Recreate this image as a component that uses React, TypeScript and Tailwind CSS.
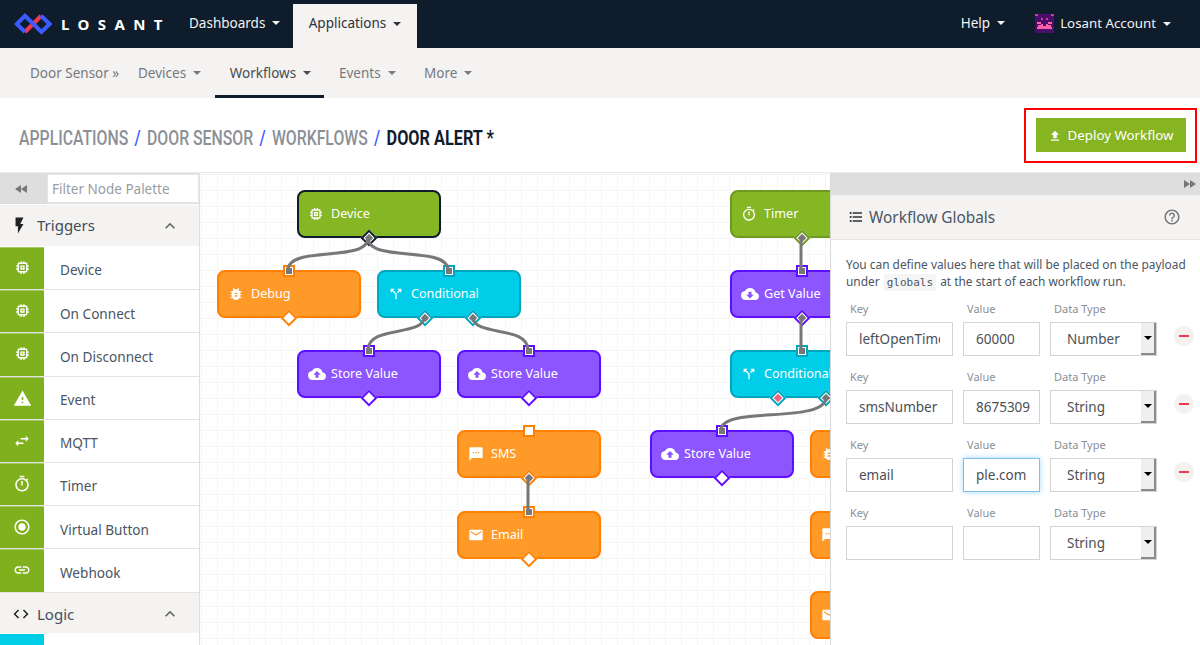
import React from "react";
import {
  MdMemory, MdWarning, MdSwapHoriz, MdOutlineTimer, MdRadioButtonChecked, MdLink, MdBugReport,
  MdCallSplit, MdCloudUpload, MdCloudDownload, MdSms, MdEmail, MdFileUpload, MdFormatListBulleted,
  MdFlashOn, MdHelpOutline, MdCode, MdExpandLess,
} from "react-icons/md";

const Caret = ({ className = "" }: { className?: string }) => (
  <span className={`inline-block w-0 h-0 border-x-[4px] border-x-transparent border-t-[4px] border-t-current ${className}`} />
);

const Logo = () => (
  <svg width="40" height="24" viewBox="14 10 40 24" fill="none" className="shrink-0">
    <path d="M25 30 L41 14" stroke="#f0394f" strokeWidth="4" />
    <path d="M25 30 L16.8 22 L25 13.8 L41.5 30 L49.7 22 L41 13.8" stroke="#3a5bff" strokeWidth="4" strokeLinejoin="miter" />
  </svg>
);

const Avatar = () => (
  <svg width="19" height="19" viewBox="0 0 12 12" shapeRendering="crispEdges" className="shrink-0">
    <rect width="12" height="12" fill="#4a0f6b" />
    <rect x="0" y="0" width="2" height="1.4" fill="#e0379a" />
    <rect x="10" y="0" width="2" height="1.4" fill="#e0379a" />
    <rect x="4" y="2.6" width="1" height="1" fill="#e0379a" />
    <rect x="7" y="2.6" width="1" height="1" fill="#e0379a" />
    <rect x="1" y="5" width="2.5" height="1" fill="#ff5fa8" />
    <rect x="8.5" y="5" width="2.5" height="1" fill="#ff5fa8" />
    <rect x="3.5" y="6" width="5" height="2.6" fill="#ff5fa8" />
    <rect x="1" y="8" width="10" height="1.4" fill="#ff5fa8" />
    <rect x="2.2" y="7" width="1.3" height="1" fill="#ff5fa8" />
    <rect x="8.5" y="7" width="1.3" height="1" fill="#ff5fa8" />
    <rect x="5" y="6.6" width="2" height="0.8" fill="#4a0f6b" />
  </svg>
);

const TopBar = () => (
  <header className="h-[48px] bg-[#0f1c2c] flex items-end shrink-0 text-[#f4f3f1] text-[13.5px]">
    <div className="w-[189px] h-[48px] flex items-center pl-[14px] gap-[7px] shrink-0">
      <Logo />
      <span className="text-[15px] font-bold tracking-[0.56em] text-white">LOSANT</span>
    </div>
    <div className="h-[48px] w-[104px] pb-[2px] flex items-center gap-[7px] shrink-0">
      Dashboards <Caret />
    </div>
    <div className="h-[44px] w-[124px] pb-[5px] flex items-center justify-center gap-[7px] bg-[#f4f3f1] text-[#2d3440] shrink-0">
      Applications <Caret />
    </div>
    <div className="flex-1" />
    <div className="h-[48px] pb-[2px] flex items-center gap-[7px] mr-[30px]">
      Help <Caret />
    </div>
    <div className="h-[48px] pb-[1px] flex items-center gap-[6px] mr-[29px]">
      <Avatar />
      <span className="flex items-center gap-[7px] text-[13.3px]">Losant Account <Caret /></span>
    </div>
  </header>
);

const SubNav = () => (
  <nav className="h-[50px] bg-[#f4f3f1] flex items-center shrink-0 text-[13.5px] text-[#77797d]">
    <span className="ml-[30px] w-[108px]">Door Sensor »</span>
    <span className="w-[77px] flex items-center gap-[7px]">Devices <Caret /></span>
    <span className="relative w-[109px] h-[50px] flex items-center justify-center gap-[7px] text-[#4a4c50] border-b-[3px] border-[#0f1c2c] pt-[3px] pl-[2px]">
      Workflows <Caret />
    </span>
    <span className="ml-[15px] w-[85px] flex items-center gap-[7px]">Events <Caret /></span>
    <span className="flex items-center gap-[7px]">More <Caret /></span>
  </nav>
);

const Crumbs = () => (
  <div className="h-[75px] bg-white flex items-center justify-between shrink-0 pl-[19px] pr-[3px] border-b border-[#ececec]">
    <h1 className="font-['Roboto',sans-serif] font-medium text-[20px] mt-[7px] scale-x-[0.79] origin-left whitespace-nowrap text-[#8b9097] flex items-center gap-[8px]">
      <span>APPLICATIONS</span><span className="text-[#3a5bff]">/</span>
      <span>DOOR SENSOR</span><span className="text-[#3a5bff]">/</span>
      <span>WORKFLOWS</span><span className="text-[#3a5bff]">/</span>
      <span className="text-[#0f1c2c] font-bold text-[20.6px]">DOOR ALERT *</span>
    </h1>
    <div className="border-2 border-[#f00] w-[173px] h-[55px] flex items-center justify-center">
      <button className="w-[150px] h-[34px] pt-px bg-[#86b521] text-white text-[13.3px] flex items-center justify-center gap-[6px]">
        <MdFileUpload size={14} /> Deploy Workflow
      </button>
    </div>
  </div>
);

const triggers: [string, React.ComponentType<{ size?: number }>, number][] = [
  ["Device", MdMemory, 17],
  ["On Connect", MdMemory, 17],
  ["On Disconnect", MdMemory, 17],
  ["Event", MdWarning, 19],
  ["MQTT", MdSwapHoriz, 18],
  ["Timer", MdOutlineTimer, 18],
  ["Virtual Button", MdRadioButtonChecked, 18],
  ["Webhook", MdLink, 18],
];

const Rewind = ({ flip = false }: { flip?: boolean }) => (
  <svg width="12" height="8" viewBox="0 0 12 8" fill="#777" className={flip ? "rotate-180" : ""}>
    <path d="M6 0 L0 4 L6 8 Z M12 0 L6 4 L12 8 Z" />
  </svg>
);

const Palette = () => (
  <aside className="w-[200px] shrink-0 border-r border-[#dedede] bg-white overflow-hidden text-[#4b5563]">
    <div className="h-[31px] bg-[#dedede] flex items-center">
      <div className="w-[47px] flex justify-center pr-[6px]"><Rewind /></div>
      <div className="w-[152px] h-[29px] pt-[2px] bg-white flex items-center pl-[4px] text-[13.5px] text-[#9a9ea4] border border-[#e6e6e6]">Filter Node Palette</div>
    </div>
    <div className="h-[41px] bg-[#f4f3f1] flex items-center text-[15px] pl-[10px] pr-[19px] mt-px text-[#444c5a]">
      <span className="text-[#222] w-[27px]"><MdFlashOn size={19} /></span>
      <span className="flex-1">Triggers</span>
      <span className="text-[#666]"><MdExpandLess size={20} /></span>
    </div>
    <ul className="mt-px">
      {triggers.map(([name, Icon, size]) => (
        <li key={name} className="h-[43.2px] flex items-center border-b-[1.5px] border-[#e4e4e4] text-[13.6px]">
          <span className="w-[44px] h-full bg-[#7fb01d] border-t border-[#a5c76a] text-white flex items-start justify-center pt-[11px] mr-[16px]">
            <Icon size={size} />
          </span>
          <span className="pt-[5px]">{name}</span>
        </li>
      ))}
    </ul>
    <div className="h-[40px] pt-[3px] bg-[#f4f3f1] flex items-center text-[15px] pl-[12px] pr-[19px] text-[#444c5a]">
      <span className="text-[#222] w-[25px]"><MdCode size={18} /></span>
      <span className="flex-1">Logic</span>
      <span className="text-[#666]"><MdExpandLess size={20} /></span>
    </div>
    <div className="h-[20px] mt-px flex"><span className="w-[44px] bg-[#00cde8]" /></div>
  </aside>
);

type Kind = "green" | "orange" | "cyan" | "purple";
const kinds: Record<Kind, { bg: string; border: string }> = {
  green: { bg: "bg-[#85b623]", border: "border-[#6f9a1e]" },
  orange: { bg: "bg-[#ff9a28]", border: "border-[#ff7f00]" },
  cyan: { bg: "bg-[#00cde8]", border: "border-[#00a6bd]" },
  purple: { bg: "bg-[#8c55ff]", border: "border-[#5e0eff]" },
};

type N = {
  x: number; y: number; kind: Kind; label: string; icon: React.ComponentType<{ size?: number }>;
  input?: "open" | "on"; outs?: ("open" | "on" | "red")[]; selected?: boolean;
};

const nodes: N[] = [
  { x: 97, y: 17, kind: "green", label: "Device", icon: MdMemory, outs: ["on"], selected: true },
  { x: 17, y: 97, kind: "orange", label: "Debug", icon: MdBugReport, input: "on", outs: ["open"] },
  { x: 177, y: 97, kind: "cyan", label: "Conditional", icon: MdCallSplit, input: "on", outs: ["on", "on"] },
  { x: 97, y: 177, kind: "purple", label: "Store Value", icon: MdCloudUpload, input: "on", outs: ["open"] },
  { x: 257, y: 177, kind: "purple", label: "Store Value", icon: MdCloudUpload, input: "on", outs: ["open"] },
  { x: 257, y: 257, kind: "orange", label: "SMS", icon: MdSms, input: "open", outs: ["on"] },
  { x: 257, y: 338, kind: "orange", label: "Email", icon: MdEmail, input: "on", outs: ["open"] },
  { x: 450, y: 257, kind: "purple", label: "Store Value", icon: MdCloudUpload, input: "on", outs: ["open"] },
  { x: 530, y: 17, kind: "green", label: "Timer", icon: MdOutlineTimer, outs: ["on"] },
  { x: 530, y: 97, kind: "purple", label: "Get Value", icon: MdCloudDownload, input: "on", outs: ["on"] },
  { x: 530, y: 177, kind: "cyan", label: "Conditional", icon: MdCallSplit, input: "on", outs: ["red", "on"] },
  { x: 610, y: 257, kind: "orange", label: "Debug", icon: MdBugReport },
  { x: 610, y: 338, kind: "orange", label: "SMS", icon: MdSms },
  { x: 610, y: 418, kind: "orange", label: "Email", icon: MdEmail },
];

const Node = ({ n }: { n: N }) => {
  const k = kinds[n.kind];
  const Icon = n.icon;
  const border = n.selected ? "border-[#0f1c2c]" : k.border;
  return (
    <div
      className={`absolute w-[144px] h-[48px] rounded-[8px] border-2 ${k.bg} ${border} text-white text-[12.6px] flex items-center pl-[9px] whitespace-nowrap`}
      style={{ left: n.x, top: n.y }}
    >
      <span className="w-[23px] flex justify-start">
        <Icon size={n.label === "Store Value" || n.label === "Get Value" ? 18 : 16} />
      </span>
      {n.label}
      {n.input && (
        <span className={`absolute left-[64px] top-[-7px] w-[12px] h-[12px] border-2 ${border} bg-white p-px`}>
          {n.input === "on" && <span className="block w-full h-full bg-[#777]" />}
        </span>
      )}
      {(n.outs ?? []).map((o, i) => {
        const pos = n.outs!.length === 2 ? (i === 0 ? "left-[40px]" : "left-[88px]") : "left-[64px]";
        return (
          <span key={i} className={`absolute ${pos} bottom-[-8px] w-[12px] h-[12px] rotate-45 border-2 ${border} bg-white p-px`}>
            {o !== "open" && <span className={`block w-full h-full ${o === "red" ? "bg-[#f0607a]" : "bg-[#777]"}`} />}
          </span>
        );
      })}
    </div>
  );
};

const Canvas = () => (
  <main className="relative flex-1 overflow-hidden bg-white bg-[linear-gradient(#f5f5f5_1px,transparent_1px),linear-gradient(90deg,#f5f5f5_1px,transparent_1px)] bg-[size:16px_16px] bg-[position:1px_1px]">
    {nodes.map((n, i) => <Node key={i} n={n} />)}
    <svg width="640" height="473" className="absolute left-0 top-0 z-10 pointer-events-none" fill="none" stroke="#777" strokeWidth="3">
      <path d="M168 65 C168 90 88 72 88 97" />
      <path d="M168 65 C168 90 248 72 248 97" />
      <path d="M224 144 C224 164 168 152 168 177" />
      <path d="M273 144 C273 164 328 152 328 177" />
      <path d="M328 304 L328 339" />
      <path d="M601 65 L601 97" />
      <path d="M601 144 L601 177" />
      <path d="M626 224 C626 252 521 232 521 257" />
    </svg>
  </main>
);

const Field = ({ label, value, w, pr, focus = false }: { label: string; value: string; w: string; pr: string; focus?: boolean }) => (
  <label className={`${w} shrink-0 flex flex-col`}>
    <span className="h-[19px] pl-[4px] text-[11px] leading-[12px] text-[#8a8f98]">{label}</span>
    <input
      readOnly
      value={value}
      className={`h-[34px] w-full bg-white border pl-[12px] ${pr} text-[13.5px] text-[#4b4f55] outline-none ${focus ? "border-[#7cc0ef] shadow-[0_0_6px_#a8d8f8]" : "border-[#d4d4d4]"}`}
    />
  </label>
);

const TypeSelect = ({ value }: { value: string }) => (
  <div className="w-[107px] shrink-0 flex flex-col">
    <span className="h-[19px] pl-[4px] text-[11px] leading-[12px] text-[#8a8f98]">Data Type</span>
    <div className="h-[34px] bg-white border border-[#d4d4d4] flex items-stretch text-[13.5px] text-[#4b4f55]">
      <span className="flex-1 pl-[16px] flex items-center">{value}</span>
      <span className="w-[15px] bg-[#efefef] border-r-2 border-b-2 border-[#8b8b8b] flex items-center justify-center text-black">
        <Caret className="border-x-[3px] border-t-[3px]" />
      </span>
    </div>
  </div>
);

const rows = [
  { key: "leftOpenTime", value: "60000", type: "Number", remove: true },
  { key: "smsNumber", value: "8675309", type: "String", remove: true },
  { key: "email", value: "ple.com", type: "String", remove: true, focus: true },
  { key: "", value: "", type: "String", remove: false },
];

const Globals = () => (
  <aside className="w-[370px] shrink-0 border-l border-[#d8d8d8] bg-white flex flex-col z-20">
    <div className="h-[22px] bg-[#dedede] flex items-center justify-end pr-[4px]"><Rewind flip /></div>
    <div className="h-[45px] bg-[#f4f3f1] border-b border-[#e6e6e6] flex items-center pl-[17px] pr-[19px] text-[15.4px] text-[#4b5563]">
      <span className="text-[#333] w-[21px]"><MdFormatListBulleted size={16} /></span>
      <span className="flex-1 pt-[2px]">Workflow Globals</span>
      <span className="text-[#777]"><MdHelpOutline size={18} /></span>
    </div>
    <div className="pl-[15px] pr-[5px] pt-[16px]">
      <p className="text-[11.9px] leading-[17px] text-[#4b5563] whitespace-nowrap">
        You can define values here that will be placed on the payload<br />
        under <code className="font-['DejaVu_Sans_Mono',monospace] text-[11px] bg-[#f5f5f5] px-[3px] py-[2px] mx-[1px]">globals</code> at the start of each workflow run.
      </p>
      <div className="mt-[12px] flex flex-col gap-[15px]">
        {rows.map((r, i) => (
          <div key={i} className="flex gap-[10px] items-end">
            <Field label="Key" value={r.key} w="w-[107px]" pr="pr-[12px]" />
            <Field label="Value" value={r.value} w="w-[77px]" pr="pr-[6px]" focus={r.focus} />
            <TypeSelect value={r.type} />
            {r.remove && (
              <span className="ml-[7px] w-[20px] h-[20px] mb-[10px] shrink-0 rounded-full bg-[#f4f1ef] flex items-center justify-center">
                <span className="w-[10px] h-[2px] bg-[#f0394f]" />
              </span>
            )}
          </div>
        ))}
      </div>
    </div>
  </aside>
);

export default function App() {
  return (
    <div className="w-[1200px] h-[645px] overflow-hidden flex flex-col bg-white font-['Noto_Sans',sans-serif]">
      <TopBar />
      <SubNav />
      <Crumbs />
      <div className="flex flex-1 min-h-0">
        <Palette />
        <Canvas />
        <Globals />
      </div>
    </div>
  );
}
